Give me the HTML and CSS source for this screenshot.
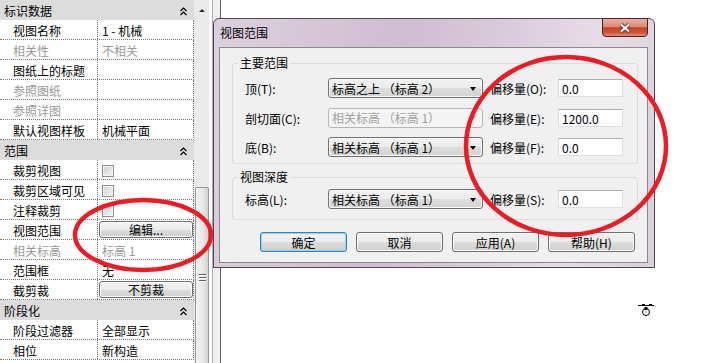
FILE: index.html
```html
<!DOCTYPE html>
<html lang="zh-CN">
<head>
  <meta charset="UTF-8">
  <title>视图范围</title>
  <link rel="stylesheet" href="styles.css">
</head>
<body>
  <div class="app">
    <!-- 属性面板 -->
    <div class="props">
      <div class="prop-head"><span>标识数据</span><svg class="fold" width="7" height="9" viewBox="0 0 7 9"><polyline points="0.5,4 3.5,1 6.5,4"/><polyline points="0.5,8 3.5,5 6.5,8"/></svg></div>
      <div class="prop-row"><span class="prop-key">视图名称</span><span class="prop-val">1 - 机械</span></div>
      <div class="prop-row off"><span class="prop-key">相关性</span><span class="prop-val">不相关</span></div>
      <div class="prop-row"><span class="prop-key">图纸上的标题</span><span class="prop-val"></span></div>
      <div class="prop-row off"><span class="prop-key">参照图纸</span><span class="prop-val"></span></div>
      <div class="prop-row off"><span class="prop-key">参照详图</span><span class="prop-val"></span></div>
      <div class="prop-row"><span class="prop-key">默认视图样板</span><span class="prop-val">机械平面</span></div>

      <div class="prop-head"><span>范围</span><svg class="fold" width="7" height="9" viewBox="0 0 7 9"><polyline points="0.5,4 3.5,1 6.5,4"/><polyline points="0.5,8 3.5,5 6.5,8"/></svg></div>
      <div class="prop-row"><span class="prop-key">裁剪视图</span><span class="prop-val"><i class="check"></i></span></div>
      <div class="prop-row"><span class="prop-key">裁剪区域可见</span><span class="prop-val"><i class="check"></i></span></div>
      <div class="prop-row"><span class="prop-key">注释裁剪</span><span class="prop-val"><i class="check"></i></span></div>
      <div class="prop-row"><span class="prop-key">视图范围</span><span class="prop-val btn-cell"><span class="cell-btn">编辑...</span></span></div>
      <div class="prop-row off"><span class="prop-key">相关标高</span><span class="prop-val">标高 1</span></div>
      <div class="prop-row"><span class="prop-key">范围框</span><span class="prop-val">无</span></div>
      <div class="prop-row"><span class="prop-key">截剪裁</span><span class="prop-val btn-cell"><span class="cell-btn">不剪裁</span></span></div>

      <div class="prop-head"><span>阶段化</span><svg class="fold" width="7" height="9" viewBox="0 0 7 9"><polyline points="0.5,4 3.5,1 6.5,4"/><polyline points="0.5,8 3.5,5 6.5,8"/></svg></div>
      <div class="prop-row"><span class="prop-key">阶段过滤器</span><span class="prop-val">全部显示</span></div>
      <div class="prop-row"><span class="prop-key">相位</span><span class="prop-val">新构造</span></div>
    </div>

    <!-- 滚动条 -->
    <div class="vscroll">
      <div class="sb-up"><i class="tri-up"></i></div>
      <div class="sb-thumb"><i class="grip"></i></div>
    </div>
    <div class="gutter"></div>
    <div class="canvas"></div>
  </div>

  <!-- 视图范围 对话框 -->
  <div class="dialog">
    <div class="titlebar">
      <span class="title">视图范围</span>
      <span class="close"><svg width="12" height="10" viewBox="0 0 12 10"><path d="M2 1.5 L10 8.5 M10 1.5 L2 8.5" stroke="#6b3a33" stroke-width="4"/><path d="M2 1.5 L10 8.5 M10 1.5 L2 8.5" stroke="#fff" stroke-width="2"/></svg></span>
    </div>
    <div class="client">
      <fieldset class="grp grp-main">
        <legend>主要范围</legend>
        <div class="frow">
          <span class="flabel">顶(T):</span>
          <div class="combo"><span>标高之上 （标高 2）</span><i class="arrow"></i></div>
          <span class="olabel">偏移量(O):</span>
          <div class="field">0.0</div>
        </div>
        <div class="frow">
          <span class="flabel">剖切面(C):</span>
          <div class="combo disabled"><span>相关标高 （标高 1）</span><i class="arrow"></i></div>
          <span class="olabel">偏移量(E):</span>
          <div class="field">1200.0</div>
        </div>
        <div class="frow">
          <span class="flabel">底(B):</span>
          <div class="combo"><span>相关标高 （标高 1）</span><i class="arrow"></i></div>
          <span class="olabel">偏移量(F):</span>
          <div class="field">0.0</div>
        </div>
      </fieldset>
      <fieldset class="grp grp-depth">
        <legend>视图深度</legend>
        <div class="frow">
          <span class="flabel">标高(L):</span>
          <div class="combo"><span>相关标高 （标高 1）</span><i class="arrow"></i></div>
          <span class="olabel">偏移量(S):</span>
          <div class="field">0.0</div>
        </div>
      </fieldset>
      <div class="actions">
        <button class="btn default">确定</button>
        <button class="btn">取消</button>
        <button class="btn">应用(A)</button>
        <button class="btn">帮助(H)</button>
      </div>
    </div>
  </div>

  <!-- 光标 -->
  <svg class="cursor" width="16" height="14" viewBox="0 0 16 14">
    <path d="M0 2.5 H16 M4 1.5 H7 M11 1.5 H14" stroke="#000" stroke-width="1" fill="none"/>
    <circle cx="8" cy="9" r="3.5" stroke="#000" stroke-width="1" fill="none"/>
    <rect x="6.5" y="4" width="3" height="3" fill="#000"/>
    <rect x="7.5" y="8.5" width="1" height="1" fill="#000"/>
  </svg>

  <!-- 红色标注 -->
  <svg class="marks" width="717" height="363" viewBox="0 0 717 363">
    <ellipse cx="566" cy="146" rx="100" ry="89" fill="none" stroke="#ed1c24" stroke-width="4.5"/>
    <ellipse cx="143" cy="235" rx="68" ry="35" fill="none" stroke="#ed1c24" stroke-width="4.5"/>
  </svg>
</body>
</html>
```

FILE: styles.css
```css
* {
  box-sizing: border-box;
}
body {
  margin: 0;
  background: #fff;
  font: 12px/1 "Noto Sans CJK SC", "Liberation Sans", sans-serif;
  color: #000;
  overflow: hidden;
}
.app {
  display: flex;
  height: 363px;
}

/* 属性面板 */
.props {
  width: 194px;
  flex: none;
}
.prop-head {
  height: 20px;
  background: #dcdcdc;
  display: flex;
  align-items: center;
  justify-content: space-between;
  padding: 2px 7px 0 4px;
}
.fold polyline {
  fill: none;
  stroke: #000;
  stroke-width: 1.2;
}
.prop-row {
  display: flex;
  height: 20px;
  border-bottom: 1px dotted #7a7a7a;
  border-right: 1px dotted #7a7a7a;
}
.prop-key {
  width: 98px;
  flex: none;
  border-right: 1px dotted #7a7a7a;
  padding: 2px 0 0 13px;
  display: flex;
  align-items: center;
}
.prop-val {
  flex: 1;
  padding: 2px 0 0 4px;
  display: flex;
  align-items: center;
}
.prop-row.off {
  color: #999;
}
.check {
  width: 12px;
  height: 12px;
  border: 1px solid #8f8f8f;
  background: linear-gradient(135deg, #d0d0d0, #f6f6f6);
  box-shadow: inset 0 0 0 1px #f4f4f4;
}
.prop-val.btn-cell {
  padding: 1px 0 1px 1px;
}
.cell-btn {
  width: 94px;
  height: 17px;
  border: 1px solid #707070;
  border-radius: 3px;
  background: linear-gradient(#f4f4f4 0%, #ebebeb 50%, #dddddd 51%, #cfcfcf 100%);
  box-shadow: inset 0 0 0 1px #fcfcfc;
  display: flex;
  align-items: center;
  justify-content: center;
  padding-top: 1px;
}

/* 滚动条 */
.vscroll {
  width: 15px;
  flex: none;
  background: #ebebeb;
  display: flex;
  flex-direction: column;
}
.sb-up {
  height: 187px;
  padding: 9px 0 0 5px;
}
.tri-up {
  display: block;
  width: 0;
  height: 0;
  border-left: 3px solid transparent;
  border-right: 3px solid transparent;
  border-bottom: 3px solid #303030;
}
.sb-thumb {
  flex: 1;
  margin: 0 0 0 1px;
  border: 1px solid #979797;
  border-bottom: none;
  border-radius: 2px 2px 0 0;
  background: linear-gradient(to right, #f5f5f5, #e6e6e6 60%, #d2d2d2);
  padding: 86px 0 0 3px;
}
.grip {
  display: block;
  width: 7px;
  height: 8px;
  background: repeating-linear-gradient(#5a5a5a 0 1px, #fff 1px 2px, transparent 2px 3px);
}
.gutter {
  width: 11px;
  flex: none;
  background: #f0f0f0;
  border-left: 3px solid #fafafa;
  box-shadow: inset 1px 0 0 #a3b1c0;
}
.canvas {
  flex: 1;
  border-left: 1px solid #5e5e5e;
  background: #fff;
}

/* 对话框 */
.dialog {
  position: absolute;
  left: 213px;
  top: 18px;
  width: 442px;
  height: 250px;
  border: 1px solid #4d474e;
  border-radius: 6px 6px 0 0;
  background: linear-gradient(100deg, #ddd0de 0%, #cfbdd1 40%, #d9cadb 60%, #e6dce7 80%, #dccfdd 100%);
  padding: 0 6px 4px 5px;
  display: flex;
  flex-direction: column;
}
.titlebar {
  height: 28px;
  flex: none;
  display: flex;
  align-items: flex-start;
}
.title {
  margin: 8px 0 0 1px;
}
.close {
  margin: -1px 0 0 auto;
  width: 46px;
  height: 19px;
  border: 1px solid #4a2622;
  border-radius: 0 0 4px 4px;
  background: linear-gradient(#eab0a2 0%, #dc8a76 45%, #c4412b 52%, #cf5538 80%, #e2907a 100%);
  display: flex;
  align-items: center;
  justify-content: center;
}
.client {
  flex: 1;
  border: 1px solid #8a8a8a;
  background: #f0f0f0;
  padding: 8px 9px 0 12px;
}
.grp {
  margin: 0;
  min-width: 0;
  border: 1px solid #d5dfe5;
  border-radius: 3px;
  padding: 8px 0 0 12px;
}
.grp legend {
  margin-left: -7px;
  padding: 0 2px;
  line-height: 14px;
}
.grp-main {
  height: 108px;
}
.grp-depth {
  height: 50px;
  margin-top: 6px;
  padding-top: 5px;
}
.frow {
  display: flex;
  align-items: center;
  height: 20px;
  margin-bottom: 9.5px;
}
.flabel {
  width: 83px;
  padding-top: 2px;
}
.combo {
  width: 155px;
  height: 20px;
  border: 1px solid #707070;
  border-radius: 3px;
  background: linear-gradient(#f2f2f2 0%, #ebebeb 50%, #dddddd 51%, #d3d3d3 100%);
  box-shadow: inset 0 0 0 1px #fafafa;
  display: flex;
  align-items: center;
  justify-content: space-between;
  padding: 1px 6px 0 3px;
}
.arrow {
  width: 0;
  height: 0;
  border-left: 3.5px solid transparent;
  border-right: 3.5px solid transparent;
  border-top: 4px solid #000;
}
.combo.disabled {
  border-color: #b6b6b6;
  background: #f4f4f4;
  box-shadow: none;
  color: #a0a0a0;
}
.combo.disabled .arrow {
  border-top-color: #b0b0b0;
}
.olabel {
  margin-left: 7px;
  width: 68px;
  padding-top: 2px;
}
.field {
  width: 65px;
  height: 18px;
  border: 1px solid #dbdfe6;
  border-top-color: #abadb3;
  background: #fff;
  padding: 2px 0 0 3px;
  display: flex;
  align-items: center;
}
.actions {
  display: flex;
  justify-content: flex-end;
  gap: 9px;
  margin-top: 12px;
  padding-right: 3px;
}
.btn {
  width: 87px;
  height: 20px;
  margin: 0;
  padding: 1px 0 0;
  font: inherit;
  color: #000;
  border: 1px solid #707070;
  border-radius: 3px;
  background: linear-gradient(#f2f2f2 0%, #ebebeb 50%, #dddddd 51%, #cfcfcf 100%);
  box-shadow: inset 0 0 0 1px #fbfbfb;
}
.btn.default {
  border-color: #3c7fb1;
  box-shadow: inset 0 0 0 1px #8fd2f2;
}

/* 光标与标注 */
.cursor {
  position: absolute;
  left: 638px;
  top: 303px;
}
.marks {
  position: absolute;
  left: 0;
  top: 0;
  pointer-events: none;
}
```
